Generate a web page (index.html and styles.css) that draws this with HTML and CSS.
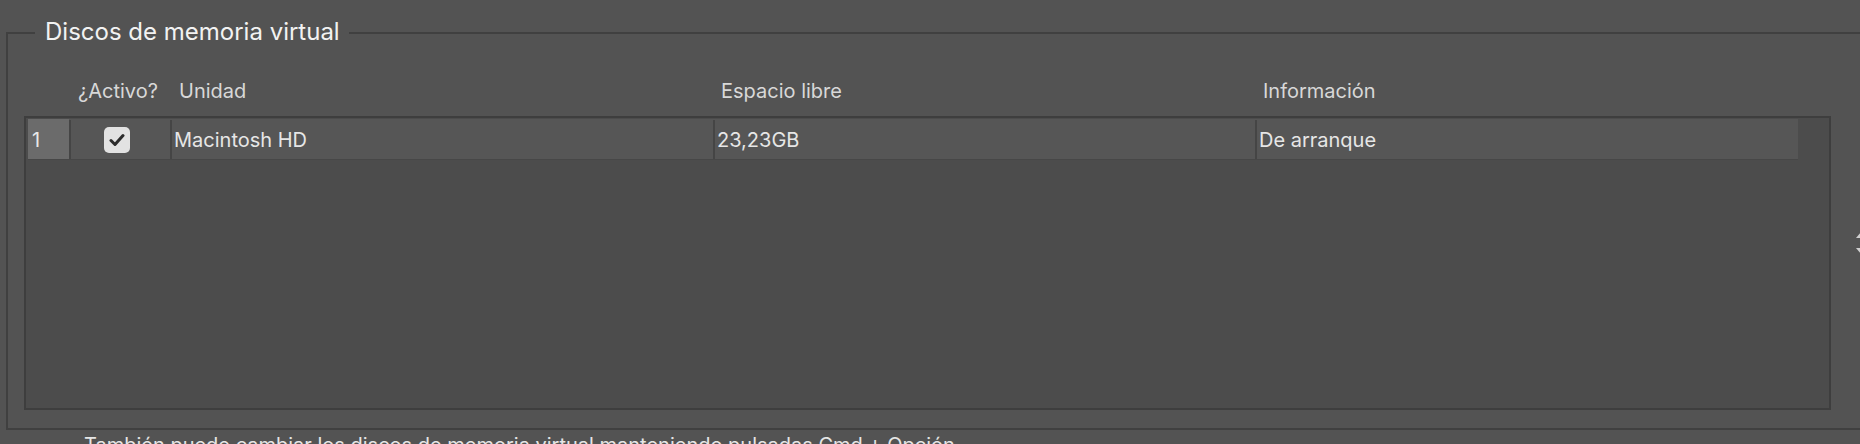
FILE: index.html
```html
<!DOCTYPE html>
<html lang="es">
<head>
<meta charset="utf-8">
<title>Discos de memoria virtual</title>
<link rel="stylesheet" href="styles.css">
</head>
<body>
<fieldset class="group">
  <legend class="group-title">Discos de memoria virtual</legend>
  <div class="cols-head">
    <span class="hc c-idx"></span>
    <span class="hc c-check">¿Activo?</span>
    <span class="hc c-unit">Unidad</span>
    <span class="hc c-free">Espacio libre</span>
    <span class="hc c-info">Información</span>
  </div>
  <div class="table-area">
    <div class="table">
      <div class="row">
        <div class="cell c-idx idx">1</div>
        <div class="cell c-check check">
          <span class="checkbox">
            <svg width="16" height="14" viewBox="0 0 16 14"><path d="M2 7.5 L6 11.5 L14 2.5" fill="none" stroke="#2b2b2b" stroke-width="3" stroke-linecap="round" stroke-linejoin="round"/></svg>
          </span>
        </div>
        <div class="cell c-unit">Macintosh HD</div>
        <div class="cell c-free">23,23GB</div>
        <div class="cell c-info">De arranque</div>
      </div>
    </div>
    <div class="stepper">
      <svg width="12" height="30" viewBox="0 0 12 30"><path d="M1 10 L6 4 L11 10 Z" fill="#d0d0d0"/><path d="M1 20 L6 26 L11 20 Z" fill="#d0d0d0"/></svg>
    </div>
  </div>
</fieldset>
<p class="note">También puede cambiar los discos de memoria virtual manteniendo pulsadas Cmd + Opción</p>
</body>
</html>
```

FILE: styles.css
```css
html, body {
  margin: 0;
  padding: 0;
  background: #535353;
  overflow: hidden;
}
body {
  width: 1860px;
  height: 444px;
  font-family: "Inter", "Liberation Sans", sans-serif;
  color: #e4e4e4;
}
.group {
  margin: 20px 0 0 6px;
  width: 1900px;
  padding: 0 0 18px 0;
  border: 2px solid #404040;
  box-sizing: border-box;
  min-width: 0;
}
.group-title {
  margin-left: 27px;
  padding: 0 9px 1px 10px;
  font-size: 24px;
  line-height: 24px;
  color: #f2f2f2;
}
.cols-head {
  display: flex;
  margin: 34px 0 0 20px;
  height: 24px;
  font-size: 20px;
  line-height: 24px;
  color: #d8d8d8;
}
.hc { display: block; white-space: nowrap; }
.c-idx { width: 41px; flex: none; box-sizing: border-box; }
.c-check { width: 101px; flex: none; box-sizing: border-box; }
.c-unit { width: 543px; flex: none; box-sizing: border-box; }
.c-free { width: 542px; flex: none; box-sizing: border-box; }
.c-info { width: 543px; flex: none; box-sizing: border-box; }
.hc.c-check { padding-left: 9px; }
.hc.c-unit { padding-left: 9px; }
.hc.c-free { padding-left: 8px; }
.hc.c-info { padding-left: 8px; }

.table-area {
  display: flex;
  align-items: flex-start;
  margin: 13px 0 0 16px;
}
.table {
  width: 1807px;
  height: 294px;
  box-sizing: border-box;
  border: 2px solid #3e3e3e;
  background: #4c4c4c;
  padding: 1px 0 0 2px;
  flex: none;
}
.row {
  display: flex;
  height: 41px;
  background: #565656;
  border-bottom: 1px solid #474747;
  box-sizing: border-box;
  width: 1770px;
  font-size: 20px;
  line-height: 40px;
  padding-top: 1px;
  color: #e6e6e6;
}
.cell {
  white-space: nowrap;
  padding-left: 2px;
  border-left: 2px solid #454545;
}
.cell.idx {
  border-left: 0;
  background: #6b6b6b;
  padding-left: 4px;
  margin-top: -1px;
  padding-top: 1px;
  color: #e8e8e8;
}
.cell.check {
  padding-left: 33px;
  display: flex;
  align-items: center;
}
.checkbox {
  width: 26px;
  height: 26px;
  border-radius: 5px;
  background: #e2e2e2;
  display: flex;
  align-items: center;
  justify-content: center;
}
.stepper {
  margin: 112px 0 0 24px;
  display: flex;
}
.note {
  margin: 3px 0 0 84px;
  font-size: 20px;
  line-height: 24px;
  color: #e6e6e6;
  white-space: nowrap;
}
```
